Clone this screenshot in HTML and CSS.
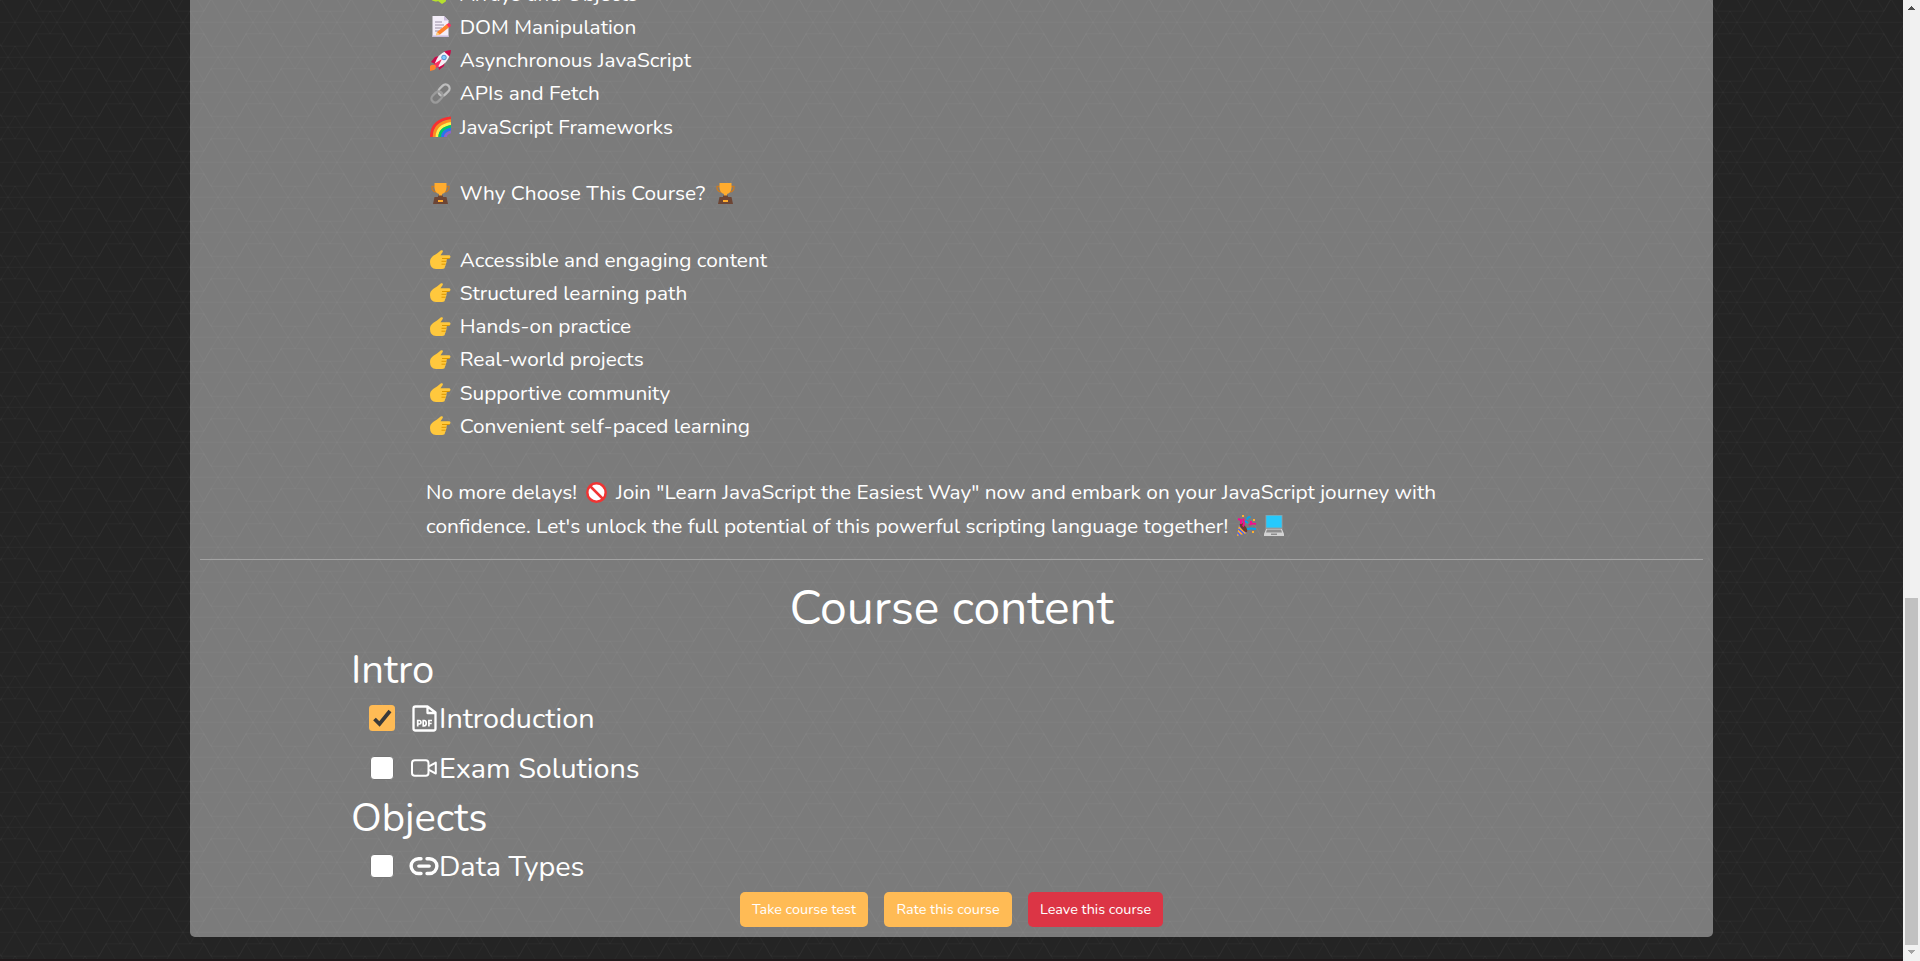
FILE: index.html
```html
<!DOCTYPE html>
<html lang="en">
<head>
<meta charset="utf-8">
<title>Learn JavaScript the Easiest Way</title>
<link rel="stylesheet" href="styles.css">
</head>
<body>
<svg class="sprite" aria-hidden="true">
  <symbol id="point" viewBox="0 0 21 21"><path fill="#ffc83d" d="M0 13C0 8 4 6.500 7 4.500L11 1.300Q13.500.700 12.700 3L10.500 6.200H19.500Q21.500 7.700 19.500 9.300H16.500Q17.300 10.500 16.300 12Q17 13.500 15.700 15Q16 16 15 17.500Q15 20 12 20H6Q0 19.500 0 13Z"/><path d="M12 9.500H19.500M11.500 12.300H16M11.500 15.200H15.500" fill="none" stroke="#df9800" stroke-width="1"/></symbol>
  <symbol id="trophy" viewBox="0 0 21 21"><path d="M5 3.500H2Q1.500 8 6 9M16 3.500h3Q19.500 8 15 9" fill="none" stroke="#c57a27" stroke-width="1.300"/><path fill="#ffac2e" d="M4.500 0h12v5q-.5 5-4.500 6v3H9v-3Q5 10 4.500 5Z"/><path fill="#6d4534" d="M8 12.500h5V14h3.500l1.500 7H3l1.500-7H8Z"/><path fill="#ffac2e" d="M8 17h5v2H8z"/></symbol>
  <symbol id="memo" viewBox="0 0 21 21"><path fill="#f3edf8" d="M2.500 0H14l4.500 4.500V21h-16z"/><path fill="#cbbcdc" d="M14 0v4.500h4.500zM2.500 19.500h16V21h-16z"/><path d="M5 6h7M5 9h9M5 12h7M5 15h4" stroke="#998ea4"/><path fill="#ff822d" d="m7 16 10-8 2.500 3L10 18.500 6.500 19z"/><path fill="#f8315f" d="m16.500 8.500 2-1.500q2.500.5 2.500 3l-2 1.500z"/><path fill="#ffce7c" d="m7 16 3 2.500-4 1z"/></symbol>
  <symbol id="rocket" viewBox="0 0 21 21"><path fill="#ca0b4a" d="M5 7 11 5.500 15 10l-1 6-5 4-1-5-5-2-2-1Z"/><path fill="#f4f0f6" d="M5 13Q8 4 16 1l4 3q-2 9-11 13Z"/><path fill="#ca0b4a" d="M14 1.500Q18 0 21 0q0 3-1.500 6.500Z"/><circle cx="14" cy="7.500" r="2.300" fill="#83cbff" stroke="#5092cf"/><path fill="#f8315f" d="m4 14 8-5-4 8-1.500 1Z"/><path fill="#ff822d" d="M0 16q2-2 5-1l1 1q0 3-2 4l-4 1z"/></symbol>
  <symbol id="chain" viewBox="0 0 21 21"><g fill="none" stroke-width="2.300"><rect x="-6.200" y="-4" width="12.400" height="8" rx="4" transform="translate(14 7) rotate(-45)" stroke="#bebebe"/><rect x="-6.200" y="-4" width="12.400" height="8" rx="4" transform="translate(7 14) rotate(-45)" stroke="#9b9b9b"/></g></symbol>
  <symbol id="rainbow" viewBox="0 0 21 21"><g fill="none" stroke-width="2.900"><path stroke="#f92f30" d="M1.400 21Q1.400 4 21 1.900"/><path stroke="#ff8b20" d="M4.200 21Q4.200 7 21 4.700"/><path stroke="#fff04d" d="M7 21Q7 10 21 7.500"/><path stroke="#00c46b" d="M9.800 21Q9.800 12.500 21 10.300"/><path stroke="#2674f0" d="M12.600 21Q12.600 15 21 13"/><path stroke="#8c65cc" d="M15.400 21Q15.400 17.500 21 15.800"/></g></symbol>
  <symbol id="clover" viewBox="0 0 21 21"><path fill="#b6df2e" d="M2 15q4-4 7 1 4-4 6-1 2 3 0 4l-3 2-4-3q-2 1-4 0-3 0-2-3Z"/></symbol>
  <symbol id="stop" viewBox="0 0 21 21"><circle cx="10.500" cy="10.500" r="9.200" fill="#fff" stroke="#f03433" stroke-width="2.500"/><path d="m4.500 4.500 12 12" stroke="#f03433" stroke-width="2.500"/></symbol>
  <symbol id="party" viewBox="0 0 21 21"><path fill="#ffb02e" d="m3 10 8 8L1 21Z"/><path d="m2.500 14 5.500 5M1.500 17.500l3 3M3.500 10.500l7 7" stroke="#3f5fff" stroke-width="1.600"/><path fill="#6d3b2c" d="M4 8q2-1 5 3 3 3 2 6-2 1-5-3-3-3-2-6Z"/><g fill="none" stroke-width="1.900"><path stroke="#f70a8d" d="M2 4l3 1v4M7 3.500q2 4 0 8M13 10q3-2 7-1"/><path stroke="#00a6ed" d="M14.500 2q-4 0-3 3M9 6l3 2M11 14q4-1 9 0"/></g><path fill="#ffb02e" d="M6 0h2v2H6zM17 4h2v2h-2zM16 16h2v2h-2z"/><path fill="#f70a8d" d="M14 6h2v2h-2z"/></symbol>
  <symbol id="laptop" viewBox="0 0 21 21"><path fill="#9b9b9b" d="M1.500 0h17v14h-17z"/><path fill="#26c9fc" d="M2.300.600h15.400v12H2.300z"/><path fill="#d3d3d3" d="M2 14h16l2 5v2H0v-2z"/><path fill="#8d8d8d" d="M3 14.500h14l1 3H2zM7 18.500h6v1.500H7z"/></symbol>
</svg>

<div class="window">
  <main class="page">
    <section class="card">
      <div class="description">
        <p><svg class="emoji"><use href="#clover"/></svg>Arrays and Objects</p>
        <p><svg class="emoji"><use href="#memo"/></svg>DOM Manipulation</p>
        <p><svg class="emoji"><use href="#rocket"/></svg>Asynchronous JavaScript</p>
        <p><svg class="emoji"><use href="#chain"/></svg>APIs and Fetch</p>
        <p><svg class="emoji"><use href="#rainbow"/></svg>JavaScript Frameworks</p>
        <p class="gap"><svg class="emoji"><use href="#trophy"/></svg>Why Choose This Course?<svg class="emoji inline"><use href="#trophy"/></svg></p>
        <p class="gap"><svg class="emoji"><use href="#point"/></svg>Accessible and engaging content</p>
        <p><svg class="emoji"><use href="#point"/></svg>Structured learning path</p>
        <p><svg class="emoji"><use href="#point"/></svg>Hands-on practice</p>
        <p><svg class="emoji"><use href="#point"/></svg>Real-world projects</p>
        <p><svg class="emoji"><use href="#point"/></svg>Supportive community</p>
        <p><svg class="emoji"><use href="#point"/></svg>Convenient self-paced learning</p>
        <p class="gap">No more delays!<svg class="emoji inline"><use href="#stop"/></svg>Join "Learn JavaScript the Easiest Way" now and embark on your JavaScript journey with</p>
        <p>confidence. Let's unlock the full potential of this powerful scripting language together!<svg class="emoji party"><use href="#party"/></svg><svg class="emoji last"><use href="#laptop"/></svg></p>
      </div>
      <hr>
      <h1>Course content</h1>
      <div class="content">
        <h2 class="intro">Intro</h2>
        <div class="item">
          <span class="slot"><svg class="checked" viewBox="0 0 26 26"><rect width="26" height="26" rx="3.500" fill="#ffbb55"/><path d="m5.500 14 5 5L21 6" fill="none" stroke="#3a3a3a" stroke-width="3.800"/></svg></span>
          <svg class="kind" viewBox="0 0 30 30" fill="none" stroke="#fff"><path stroke-width="2.300" stroke-linejoin="round" d="M18.500 3.500H6.500q-2 0-2 2v20q0 2 2 2h18q2 0 2-2v-16zM18.500 3.500v6.500h8"/><path stroke-width="1.700" d="M8.700 23.500v-6h1.800q1.500 0 1.500 1.700T10.500 21H8.700M14.200 17.500v5.300h1q2 0 2-2.600t-2-2.700zM19.900 23.500v-6H23M19.900 20.500h2.800"/></svg>
          <span>Introduction</span>
        </div>
        <div class="item">
          <span class="slot"><i class="box"></i></span>
          <svg class="kind" viewBox="0 0 30 30" fill="none" stroke="#fff" stroke-width="2" stroke-linejoin="round"><rect x="3" y="7.300" width="16.500" height="15.500" rx="2.800"/><path d="m19.500 13.600 7.300-4v11l-7.300-4"/></svg>
          <span>Exam Solutions</span>
        </div>
        <h2>Objects</h2>
        <div class="item">
          <span class="slot"><i class="box"></i></span>
          <svg class="kind" viewBox="0 0 30 30" fill="none" stroke="#fff" stroke-width="3.400"><path stroke-linecap="round" d="M12 7.700H9.500a7.400 7.400 0 0 0 0 14.800H12M18 7.700h2.500a7.400 7.400 0 0 1 0 14.800H18M9.800 15.100h10.400"/></svg>
          <span>Data Types</span>
        </div>
      </div>
      <div class="actions">
        <button class="btn">Take course test</button>
        <button class="btn">Rate this course</button>
        <button class="btn danger">Leave this course</button>
      </div>
    </section>
  </main>
  <aside class="scrollbar">
    <svg viewBox="0 0 17 17"><path fill="#505050" d="M8 7h1v1h1v1h1v1h1v1H5v-1h1V9h1V8h1z"/></svg>
    <i class="thumb"></i>
    <svg viewBox="0 0 17 17"><path fill="#a3a3a3" d="M5 6h7v1h-1v1h-1v1H9v1H8V9H7V8H6V7H5z"/></svg>
  </aside>
</div>
</body>
</html>
```
FILE: styles.css
```css
* { box-sizing: border-box; }
body {
  margin: 0;
  height: 961px;
  overflow: hidden;
  color: #fff;
  font-family: Nunito, Lato, sans-serif;
}
.sprite { display: none; }
.window { display: flex; height: 961px; }
.page {
  flex: 1;
  padding: 0 190px;
  border-bottom: 2px solid #20191b;
  background: #242424 url("data:image/svg+xml,%3Csvg xmlns='http://www.w3.org/2000/svg' width='70' height='70'%3E%3Cdefs%3E%3Cpath id='m' d='M-14-23.600L14 23.600M14-23.600L-14 23.600M-14-23.600H14M-14 23.800H14M14 23.600L0 46.400L-14 23.600M14 46.400L0 23.600L-14 46.400M14 23.600L21 11.400M14 46.400L21 58.600M-14 23.600L-21 11.400M-14 46.400L-21 58.600'/%3E%3C/defs%3E%3Cg fill='none' stroke='%23fff' stroke-opacity='.024'%3E%3Cuse href='%23m' x='15' y='22.400'/%3E%3Cuse href='%23m' x='85' y='22.400'/%3E%3Cuse href='%23m' x='50' y='57.400'/%3E%3Cuse href='%23m' x='-20' y='57.400'/%3E%3Cuse href='%23m' x='50' y='-12.600'/%3E%3Cuse href='%23m' x='-20' y='-12.600'/%3E%3Cuse href='%23m' x='15' y='-47.600'/%3E%3Cuse href='%23m' x='85' y='-47.600'/%3E%3Cuse href='%23m' x='15' y='92.400'/%3E%3Cpath d='M0 22.400H70M0 57.400H70'/%3E%3C/g%3E%3C/svg%3E");
}
.card {
  height: 937px;
  padding: 0 10px;
  overflow: hidden;
  background: rgba(255, 255, 255, .4);
  border-radius: 0 0 5px 5px;
}
.description { margin: -22.500px 0 0 226px; font-size: 20.800px; white-space: nowrap; }
.description p { margin: 0; height: 33.280px; line-height: 33.280px; }
.description p.gap { margin-top: 33.280px; }
.emoji { width: 21px; height: 21px; margin: 0 9.200px 0 3.500px; vertical-align: -3.500px; }
.emoji.inline { margin: 0 8.500px 0 9.500px; }
.emoji.party { margin: 0 8.500px 0 8px; }
.emoji.last { margin-left: -2px; }
hr { margin: 15.700px 0 0; height: 1px; border: 0; background: #a2a2a2; }
h1, h2 { margin: 0; font-weight: 400; white-space: nowrap; }
h1 { margin-top: 19.200px; height: 58px; line-height: 58px; font-size: 48px; text-align: center; }
.content { margin-left: 151px; }
h2 { height: 48px; line-height: 50px; font-size: 40px; }
.intro { margin-top: 8.300px; }
.item { display: flex; align-items: center; height: 50px; font-size: 28.800px; white-space: nowrap; }
.slot { display: flex; justify-content: center; width: 26px; margin-left: 18px; }
.checked { width: 26px; height: 26px; }
.box { width: 24px; height: 24px; border: 1px solid #757575; border-radius: 4px; background: #fff; }
.kind { width: 30px; height: 30px; margin-left: 14px; }
.actions { display: flex; justify-content: center; gap: 16px; margin-top: .7px; }
.btn {
  width: 128px;
  height: 35px;
  padding: 0 0 1px;
  border: 0;
  border-radius: 5px;
  background: #ffbb55;
  color: #fff;
  font: 14.400px Nunito, Lato, sans-serif;
}
.danger { width: 135px; background: #dc3545; }
.scrollbar { display: flex; flex-direction: column; width: 17px; background: #f1f1f1; }
.scrollbar svg { width: 17px; height: 17px; margin-top: -1px; }
.thumb { width: 13px; height: 347px; margin: auto 2px 0; background: #c1c1c1; }
```
